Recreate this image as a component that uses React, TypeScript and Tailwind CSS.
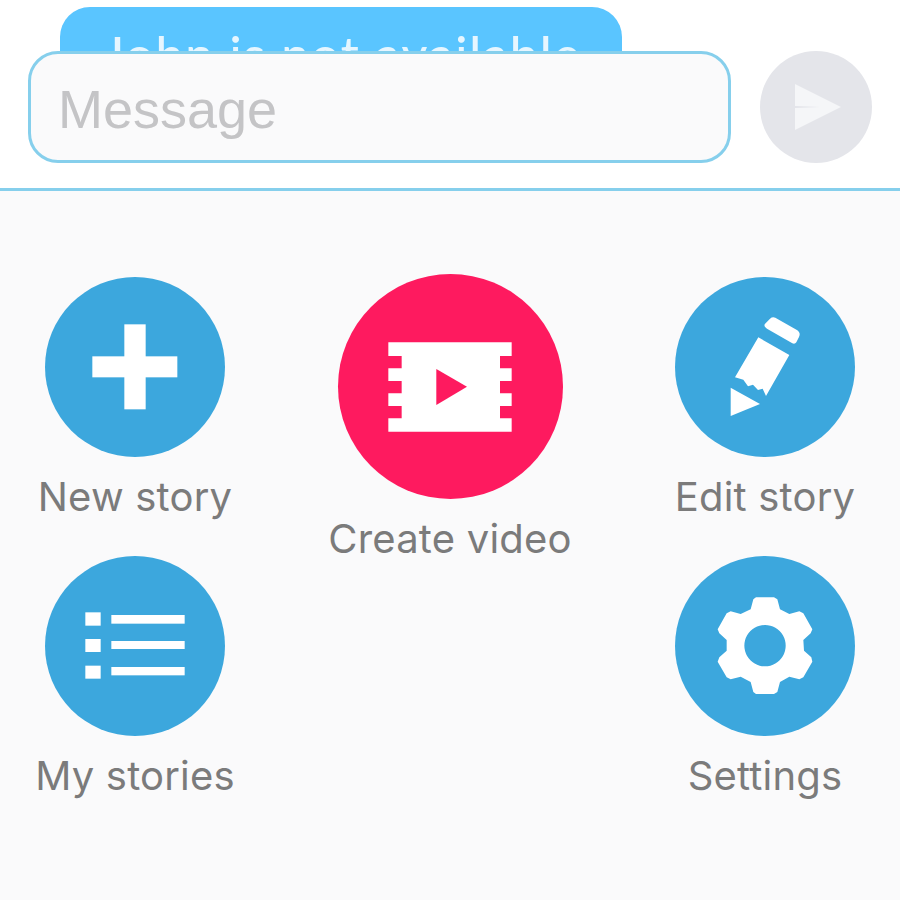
const SANS = 'font-["Liberation_Sans",Arial,sans-serif]'

function PlusIcon() {
  return (
    <svg viewBox="15 21 540 540" className="h-full w-full" fill="#fff">
      <rect x="253" y="163" width="64" height="255" />
      <rect x="157" y="259" width="255" height="63" />
    </svg>
  )
}

function PencilIcon() {
  return (
    <svg viewBox="15 21 540 540" className="h-full w-full" fill="#fff">
      <path d="M300 146q7-6 16-3l66 38q11 8 5 20l-8 16q-4 6-12 3l-76-44q-10-6-7-13z" />
      <path d="M265 202l93 53-70 123-10-22-14 4-15-16-15 5-14-20-25-7z" />
      <path d="M182 353l88 49-88 36z" />
    </svg>
  )
}

function ListIcon() {
  return (
    <svg viewBox="15 18 540 540" className="h-full w-full" fill="#fff">
      <rect x="136" y="187" width="46" height="40" />
      <rect x="136" y="267" width="46" height="39" />
      <rect x="136" y="347" width="46" height="39" />
      <rect x="214" y="195" width="220" height="26" />
      <rect x="214" y="273" width="220" height="24" />
      <rect x="214" y="351" width="220" height="25" />
    </svg>
  )
}

function GearIcon() {
  return (
    <svg viewBox="15 18 540 540" className="h-full w-full">
      <path
        fill="#fff"
        fillRule="evenodd"
        d="M250 148l8-6h54l10 6 8 30 28 14 30-8 12 6 27 48-5 12-22 20 2 32 22 20 3 13-27 47-12 6-30-8-28 16-8 30-10 6h-54l-8-6-8-30-30-16-30 8-12-6-27-47 5-13 22-20v-32l-22-20-5-12 27-48 12-6 30 8 30-14zM285 225a62 62 0 1 0 0.1 0z"
      />
    </svg>
  )
}

function FilmIcon() {
  return (
    <svg viewBox="24 12 675 675" className="h-full w-full">
      <path
        fill="#fff"
        d="M175 217h370v41h-35v37h35v38h-35v37h35v38h-35v37h35v40h-370v-40h40v-37h-40v-38h40v-37h-40v-38h40v-37h-40z"
      />
      <path fill="#fe1a5f" d="M319 297l92 53-92 55z" />
    </svg>
  )
}

function Action({ label, big, icon }: { label: string; big?: boolean; icon: React.ReactNode }) {
  return (
    <div className="flex flex-col items-center">
      <div className={big ? 'h-[225px] w-[225px] rounded-full bg-[#fe1a5f]' : 'h-[180px] w-[180px] rounded-full bg-[#3ca7dd]'}>
        {icon}
      </div>
      <div className="mt-[18px] h-[44px] whitespace-nowrap font-['Inter',sans-serif] text-[40px] leading-[44px] tracking-[0.2px] text-[#7b7b7b]">
        {label}
      </div>
    </div>
  )
}

export default function App() {
  return (
    <div className={`flex h-[900px] w-[900px] flex-col overflow-hidden bg-[#fafafb] ${SANS}`}>
      {/* Compose area */}
      <div className="h-[191px] shrink-0 border-b-[3px] border-[#86cfec] bg-white pt-[7px]">
        <div className="ml-[60px] h-[80px] w-[562px] overflow-hidden rounded-t-[30px] bg-[#5ac5ff] pl-[43px] pt-[21px]">
          <span className="whitespace-nowrap font-['Lato',sans-serif] text-[50px] font-medium leading-[52px] tracking-[1.8px] text-[#e6f6ff]">
            John is not available
          </span>
        </div>
        <div className="relative z-10 -mt-[36px] flex items-center pl-[28px]">
          <div className="flex h-[112px] w-[703px] items-center rounded-[30px] border-[3px] border-[#86cfec] bg-[#fafafb] pl-[27px] pt-[3px] text-[54px] leading-[60px] text-[#c4c4c6]">
            Message
          </div>
          <div className="ml-[29px] h-[112px] w-[112px] rounded-full bg-[#e4e5ea]">
            <svg viewBox="760 51 112 112" className="h-full w-full">
              <path fill="#f5f6f8" d="M795 84l46 23-46 23z" />
              <path fill="#e4e5ea" d="M795 106l25 1-25 1z" />
            </svg>
          </div>
        </div>
      </div>

      {/* Actions */}
      <div className="grid grow grid-cols-[270px_360px_270px] items-start pt-[83px]">
        <div className="flex flex-col gap-[37px] pt-[3px]">
          <Action label="New story" icon={<PlusIcon />} />
          <Action label="My stories" icon={<ListIcon />} />
        </div>
        <Action label="Create video" big icon={<FilmIcon />} />
        <div className="flex flex-col gap-[37px] pt-[3px]">
          <Action label="Edit story" icon={<PencilIcon />} />
          <Action label="Settings" icon={<GearIcon />} />
        </div>
      </div>
    </div>
  )
}
